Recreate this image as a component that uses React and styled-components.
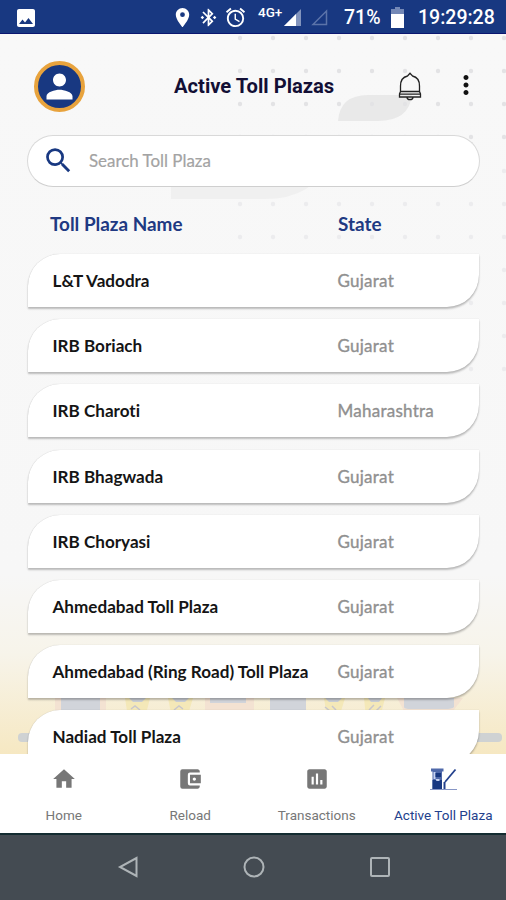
import React from "react";
import styled, { createGlobalStyle } from "styled-components";
import {
    MdAccountBalanceWallet,
    MdAlarm,
    MdBluetoothConnected,
    MdHome,
    MdImage,
    MdInsertChart,
    MdLocationOn,
    MdMoreVert,
    MdPerson,
    MdSearch,
} from "react-icons/md";

const GlobalStyle = createGlobalStyle`
    * {
        box-sizing: border-box;
        margin: 0;
        padding: 0;
    }
    body {
        background: #f8f8f8;
        overflow: hidden;
    }
    svg {
        display: block;
        flex-shrink: 0;
    }
`;

const Screen = styled.div`
    width: 506px;
    height: 900px;
    display: flex;
    flex-direction: column;
    overflow: hidden;
    font-family: Lato, sans-serif;
    font-variant-ligatures: none;
`;

const StatusBar = styled.div`
    height: 34px;
    display: flex;
    align-items: center;
    justify-content: space-between;
    padding: 2px 10px 0 14px;
    background: #183881;
    border-bottom: 1px solid #0b1670;
    color: #fff;
    font: 500 19.5px Roboto, sans-serif;
`;

const StatusIcons = styled.div`
    display: flex;
    align-items: center;
`;

const BluetoothIcon = styled(MdBluetoothConnected)`
    margin-left: 4px;
`;

const AlarmIcon = styled(MdAlarm)`
    margin-left: 5px;
`;

const Network = styled.span`
    font-size: 13.5px;
    align-self: flex-start;
    line-height: 13px;
    margin-left: 11px;
    width: 26px;
    white-space: nowrap;
`;

const Percent = styled.span`
    width: 38px;
    margin-left: 16px;
    white-space: nowrap;
`;

const Clock = styled.span`
    width: 78px;
    margin-left: 14px;
    white-space: nowrap;
`;

const Content = styled.main`
    flex: 1;
    min-height: 0;
    position: relative;
    overflow: hidden;
    isolation: isolate;
    padding: 0 26px;
    background: linear-gradient(#f8f8f8 0, #f7f7f7 540px, #f7f4ea 620px, #f6e8c2 720px);
`;

const Backdrop = styled.svg`
    position: absolute;
    top: 0;
    left: 0;
    z-index: -1;
`;

const Header = styled.header`
    height: 101px;
    padding: 3px 0 0 8px;
    display: flex;
    align-items: center;
`;

const Avatar = styled.div`
    width: 51px;
    height: 51px;
    flex-shrink: 0;
    display: flex;
    align-items: center;
    justify-content: center;
    border: 4px solid #e8a33d;
    border-radius: 50%;
    background: #183881;
    color: #fff;
`;

const Title = styled.h1`
    width: 224px;
    flex-shrink: 0;
    margin-left: 89px;
    font: 700 20.2px Roboto, sans-serif;
    color: #130f35;
    white-space: nowrap;
`;

const MoreIcon = styled(MdMoreVert)`
    margin: -2px 0 0 29px;
    color: #111;
`;

const SearchBox = styled.div`
    height: 52px;
    display: flex;
    align-items: center;
    gap: 14px;
    padding: 0 0 1px 14px;
    margin: 0 0 0 1px;
    border: 1px solid #d9d9d9;
    border-bottom-color: #cfcfcf;
    border-radius: 26px;
    background: #fff;
    font-size: 16.9px;
    color: #a3a3a3;
    -webkit-text-stroke: 0.2px #a3a3a3;
`;

const TableHead = styled.div`
    height: 67px;
    display: flex;
    align-items: center;
    padding: 6px 0 0 24px;
    font-size: 18.9px;
    font-weight: 700;
    color: #203982;
`;

const HeadCell = styled.span`
    width: ${({ $width }) => $width};
`;

const List = styled.ul`
    display: flex;
    flex-direction: column;
    gap: 12.2px;
    list-style: none;
`;

const Row = styled.li`
    height: 53px;
    flex-shrink: 0;
    display: flex;
    align-items: center;
    margin: 0 1px 0 2px;
    padding: 0 0 0 24.5px;
    border-radius: 32px 0 32px 0;
    background: #fff;
    box-shadow: 0 2px 2px rgba(0, 0, 0, 0.24), 0 0 1px rgba(0, 0, 0, 0.22);
`;

const PlazaName = styled.span`
    width: 285px;
    font-size: 17.1px;
    font-weight: 700;
    color: #151515;
    white-space: nowrap;
`;

const PlazaState = styled.span`
    font-size: 17px;
    letter-spacing: 0.25px;
    color: #909090;
    -webkit-text-stroke: 0.35px #909090;
`;

const TabBar = styled.nav`
    height: 79px;
    display: grid;
    grid-template-columns: repeat(4, 1fr);
    background: #fff;
`;

const Tab = styled.div`
    display: flex;
    flex-direction: column;
    align-items: center;
    gap: 12px;
    padding: 12px 0 0 1px;
    font: 400 13.5px/22px Roboto, sans-serif;
    white-space: nowrap;
    color: ${({ $active }) => ($active ? "#23418d" : "#777")};
`;

const SystemBar = styled.div`
    height: 67px;
    display: flex;
    align-items: center;
    justify-content: center;
    gap: 102px;
    padding: 0 0 2px 1px;
    border-top: 2px solid #142c31;
    background: #444b52;
`;

const plazas = [
    { name: "L&T Vadodra", state: "Gujarat" },
    { name: "IRB Boriach", state: "Gujarat" },
    { name: "IRB Charoti", state: "Maharashtra" },
    { name: "IRB Bhagwada", state: "Gujarat" },
    { name: "IRB Choryasi", state: "Gujarat" },
    { name: "Ahmedabad Toll Plaza", state: "Gujarat" },
    { name: "Ahmedabad (Ring Road) Toll Plaza", state: "Gujarat" },
    { name: "Nadiad Toll Plaza", state: "Gujarat" },
];

const dotColumns = [240, 273, 306, 339, 372, 405, 438, 471, 504];
const dotRows = [4, 37, 70, 103, 137, 170, 203, 236, 269, 302, 335];

const Scenery = () => (
    <Backdrop width="506" height="720" viewBox="0 0 506 720">
        <path d="M338 87q2-26 30-26h44q-3 26-34 26z" fill="#e9e9e9" />
        <path d="M171 125h157q-12 40-64 40h-93z" fill="#f0f0f0" />
        {dotRows.map((y) =>
            dotColumns.map((x) => (
                <circle
                    key={`${x}-${y}`}
                    cx={x}
                    cy={y}
                    r="2.2"
                    fill={y > 130 ? "#ececee" : "#e3e3e5"}
                />
            ))
        )}
        <rect x="18" y="699" width="484" height="9" rx="4" fill="#cfd2d3" />
        <path d="M55 664h51v20H55zM205 664h49v20h-49zM397 664h66l-10 13h-49z" fill="#f3e2d2" />
        <path d="M61 664h39v14H61zM210 664h36v5h-36zM270 664h36v12h-36zM404 664h50v9q-2 2-9 2h-34q-7 0-7-2z" fill="#d1d4da" />
        <path d="M125 664h25l-5 20h-17zM168 664h25l-6 20h-15zM324 664h21l-6 20h-12zM364 664h21l-5 20h-14z" fill="#f4e8b8" />
        <path d="M129 664h17l-4 4h-9zM172 664h17l-4 4h-9zM325 664h17l-4 4h-9zM368 664h14l-3 4h-8z" fill="#cbcfd6" />
        <path d="M131 675l4-3 5 4M174 676l5-4 4 3M325 673l5 4M332 672l4 4M369 676l5-5M376 677l5-5" fill="none" stroke="#c9c7cb" strokeWidth="1.5" />
    </Backdrop>
);

const SignalIcon = () => (
    <svg width="17" height="17" viewBox="0 0 17 17">
        <path d="M17 0v17H0z" fill="#8294bd" />
        <path d="M12 5v12H0z" fill="#fff" />
    </svg>
);

const EmptySignalIcon = styled(({ className }) => (
    <svg className={className} width="17" height="17" viewBox="0 0 17 17">
        <path d="M15.5 2v13.5H2z" fill="none" stroke="#5b73a9" strokeWidth="1.5" />
    </svg>
))`
    margin-left: 10px;
`;

const BatteryIcon = styled(({ className }) => (
    <svg className={className} width="13" height="22" viewBox="0 0 13 22">
        <path d="M4 0h5v2h4v6H0V2h4z" fill="#7488b6" />
        <path d="M0 7h13v14H0z" fill="#fff" />
    </svg>
))`
    margin-left: 9px;
`;

const BellIcon = () => (
    <svg width="24" height="29" viewBox="0 0 24 29" fill="none" stroke="#222" strokeWidth="1.3">
        <path d="M9.5 4L12 1.3 14.5 4C19 5 21.5 9 21.5 14v5.5L22.5 22v3h-21v-3l1-2.500V14c0-5 2.500-9 7-10z" />
        <path d="M3 19.5h18M1.5 22.2h21M9 25c0 3.600 6 3.600 6 0" />
    </svg>
);

const TollIcon = () => (
    <svg width="27" height="26" viewBox="0 0 27 26">
        <path d="M1 2.5h12.5v3H12V23H2.5V5.5H1z" fill="#4f69aa" />
        <path d="M2.5 14H12v9H2.5z" fill="#183881" />
        <path d="M3.5 6h2v7h-2zM5.5 13h4v2h-3z" fill="#c7d3f2" />
        <path d="M5.5 7H11v4H5.5z" fill="#183881" />
        <path d="M0 23.5h27" stroke="#8796c5" />
        <path d="M14.5 23v-7" stroke="#23418d" strokeWidth="2" />
        <path d="M15 16L25.5 3.5" stroke="#23418d" strokeWidth="1.8" />
    </svg>
);

const tabs = [
    { label: "Home", icon: <MdHome size={26} /> },
    { label: "Reload", icon: <MdAccountBalanceWallet size={26} /> },
    { label: "Transactions", icon: <MdInsertChart size={26} /> },
    { label: "Active Toll Plaza", icon: <TollIcon />, active: true },
];

const App = () => {
    return (
        <Screen>
            <GlobalStyle />
            <StatusBar>
                <MdImage size={24} />
                <StatusIcons>
                    <MdLocationOn size={23} />
                    <BluetoothIcon size={21} />
                    <AlarmIcon size={23} />
                    <Network>4G+</Network>
                    <SignalIcon />
                    <EmptySignalIcon />
                    <Percent>71%</Percent>
                    <BatteryIcon />
                    <Clock>19:29:28</Clock>
                </StatusIcons>
            </StatusBar>
            <Content>
                <Scenery />
                <Header>
                    <Avatar>
                        <MdPerson size={39} />
                    </Avatar>
                    <Title>Active Toll Plazas</Title>
                    <BellIcon />
                    <MoreIcon size={30} />
                </Header>
                <SearchBox>
                    <MdSearch size={33} color="#183881" />
                    Search Toll Plaza
                </SearchBox>
                <TableHead>
                    <HeadCell $width="288px">Toll Plaza Name</HeadCell>
                    <HeadCell>State</HeadCell>
                </TableHead>
                <List>
                    {plazas.map((plaza) => (
                        <Row key={plaza.name}>
                            <PlazaName>{plaza.name}</PlazaName>
                            <PlazaState>{plaza.state}</PlazaState>
                        </Row>
                    ))}
                </List>
            </Content>
            <TabBar>
                {tabs.map((tab) => (
                    <Tab key={tab.label} $active={tab.active}>
                        {tab.icon}
                        {tab.label}
                    </Tab>
                ))}
            </TabBar>
            <SystemBar>
                <svg width="24" height="24" fill="none" stroke="#aeb4b7" strokeWidth="2">
                    <path d="M20.5 3v18L4 12z" />
                </svg>
                <svg width="24" height="24" fill="none" stroke="#aeb4b7" strokeWidth="2">
                    <circle cx="12" cy="12" r="9.5" />
                </svg>
                <svg width="24" height="24" fill="none" stroke="#aeb4b7" strokeWidth="2">
                    <rect x="3" y="3" width="18" height="18" rx="1" />
                </svg>
            </SystemBar>
        </Screen>
    );
};

export default App;
